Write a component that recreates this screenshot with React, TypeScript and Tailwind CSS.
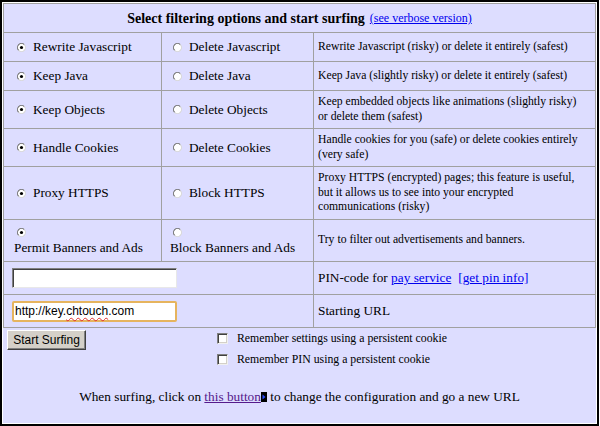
import React from "react";

const serif = "font-['Liberation_Serif','Times_New_Roman',serif]";
const sans = "font-['Liberation_Sans',Arial,sans-serif]";

function Radio({ checked }: { checked?: boolean }) {
  return (
    <svg width="9" height="9" viewBox="0 0 12 12" className="shrink-0 ml-[3px]">
      <circle cx="6" cy="6" r="5.3" fill="#fff" />
      <path d="M2.25 9.75 A5.3 5.3 0 0 1 9.75 2.25" fill="none" stroke="#6e6e6e" strokeWidth="1.4" />
      <path d="M9.75 2.25 A5.3 5.3 0 0 1 2.25 9.75" fill="none" stroke="#d6d6d6" strokeWidth="1.4" />
      {checked && <circle cx="6" cy="6" r="2.1" fill="#000" />}
    </svg>
  );
}

function Opt({ label, checked, first }: { label: string; checked?: boolean; first?: boolean }) {
  return (
    <div className={`bg-[#ddf] flex items-center ${first ? "pl-[10px]" : "pl-[8px]"}`}>
      <Radio checked={checked} />
      <span className="ml-[7px] text-[13.3px] whitespace-nowrap">{label}</span>
    </div>
  );
}

function Desc({ lines }: { lines: string[] }) {
  return (
    <div className="bg-[#ddf] flex items-center pl-[4px] text-[11.7px] leading-[14.5px]">
      <div>
        {lines.map((l, i) => (
          <div key={i} className="whitespace-nowrap">
            {l}
          </div>
        ))}
      </div>
    </div>
  );
}

function Check() {
  return (
    <span className="inline-block w-[11px] h-[11px] bg-white border border-t-[#808080] border-l-[#808080] border-r-[#f0f0f0] border-b-[#f0f0f0] shadow-[inset_1px_1px_0_#404040,inset_-1px_-1px_0_#d4d0c8]" />
  );
}

export default function App() {
  return (
    <div className={`${serif} text-black w-[599px] h-[426px] border-2 border-black bg-[#ddf]`}>
      <div className="h-full border border-white flex flex-col">
        <div className="grid grid-cols-[157px_151px_281px] grid-rows-[28px_28px_28px_37px_37px_52px_41px_32px_32px] gap-px bg-[#a0a0a0] border border-[#a0a0a0]">
          <div className="col-span-3 bg-[#ddf] flex items-center justify-center">
            <span className="font-bold text-[14px]">Select filtering options and start surfing</span>
            <a className="ml-[5px] text-[12px] text-[#0000ee] underline">(see verbose version)</a>
          </div>

          <Opt first checked label="Rewrite Javascript" />
          <Opt label="Delete Javascript" />
          <Desc lines={["Rewrite Javascript (risky) or delete it entirely (safest)"]} />

          <Opt first checked label="Keep Java" />
          <Opt label="Delete Java" />
          <Desc lines={["Keep Java (slightly risky) or delete it entirely (safest)"]} />

          <Opt first checked label="Keep Objects" />
          <Opt label="Delete Objects" />
          <Desc lines={["Keep embedded objects like animations (slightly risky)", "or delete them (safest)"]} />

          <Opt first checked label="Handle Cookies" />
          <Opt label="Delete Cookies" />
          <Desc lines={["Handle cookies for you (safe) or delete cookies entirely", "(very safe)"]} />

          <Opt first checked label="Proxy HTTPS" />
          <Opt label="Block HTTPS" />
          <Desc
            lines={[
              "Proxy HTTPS (encrypted) pages; this feature is useful,",
              "but it allows us to see into your encrypted",
              "communications (risky)",
            ]}
          />

          <div className="bg-[#ddf] flex flex-col justify-center pl-[10px]">
            <div className="h-[14px] flex items-center">
              <Radio checked />
            </div>
            <span className="text-[13.3px] leading-[16px] whitespace-nowrap">Permit Banners and Ads</span>
          </div>
          <div className="bg-[#ddf] flex flex-col justify-center pl-[8px]">
            <div className="h-[14px] flex items-center">
              <Radio />
            </div>
            <span className="text-[13.3px] leading-[16px] whitespace-nowrap">Block Banners and Ads</span>
          </div>
          <Desc lines={["Try to filter out advertisements and banners."]} />

          <div className="col-span-2 bg-[#ddf] flex items-center pl-[8px]">
            <div className="w-[165px] h-[20px] bg-white border border-t-[#808080] border-l-[#808080] border-r-[#e8e8e8] border-b-[#e8e8e8] shadow-[inset_1px_1px_0_#404040]" />
          </div>
          <div className="bg-[#ddf] flex items-center pl-[4px] text-[13.3px] whitespace-nowrap">
            <span>PIN-code for&nbsp;</span>
            <a className="text-[#0000ee] underline">pay service</a>
            <a className="ml-[7px] text-[#0000ee] underline">[get pin info]</a>
          </div>

          <div className="col-span-2 bg-[#ddf] flex items-center pl-[8px]">
            <div
              className={`${sans} w-[165px] h-[21px] bg-white border-2 border-[#e6b45e] rounded-[2px] flex items-center pl-[1px] text-[12px] text-black`}
            >
              http://key.
              <span className="underline decoration-wavy decoration-[#e03030] decoration-1 underline-offset-2">chtouch</span>
              .com
            </div>
          </div>
          <div className="bg-[#ddf] flex items-center pl-[4px] text-[13.3px]">Starting URL</div>
        </div>

        <div className="flex-1 flex flex-col">
          <div className="flex px-[4px]">
            <div className="pt-[2px]">
              <button
                className={`${sans} w-[79px] h-[20px] bg-[#d4d0c8] text-[12px] text-black border border-t-white border-l-white border-r-[#404040] border-b-[#404040] shadow-[inset_-1px_-1px_0_#808080] flex items-center justify-center`}
              >
                Start Surfing
              </button>
            </div>
            <div className="ml-[131px] flex flex-col text-[11.8px]">
              <div className="h-[21px] flex items-center">
                <Check />
                <span className="ml-[9px] whitespace-nowrap">Remember settings using a persistent cookie</span>
              </div>
              <div className="h-[21px] flex items-center">
                <Check />
                <span className="ml-[9px] whitespace-nowrap">Remember PIN using a persistent cookie</span>
              </div>
            </div>
          </div>
          <div className="mt-[19px] h-[16px] leading-[16px] text-[13.3px] text-center whitespace-nowrap">
            When surfing, click on <a className="text-[#551a8b] underline">this button</a>
            <svg width="6" height="10" viewBox="0 0 6 10" className="inline-block align-[-1px]">
              <rect x="0" y="0" width="6" height="10" fill="#000" />
              <path d="M1.5 2.5 L4.5 5 L1.5 7.5 Z" fill="#2a4dff" />
            </svg>{" "}
            to change the configuration and go a new URL
          </div>
        </div>
      </div>
    </div>
  );
}
